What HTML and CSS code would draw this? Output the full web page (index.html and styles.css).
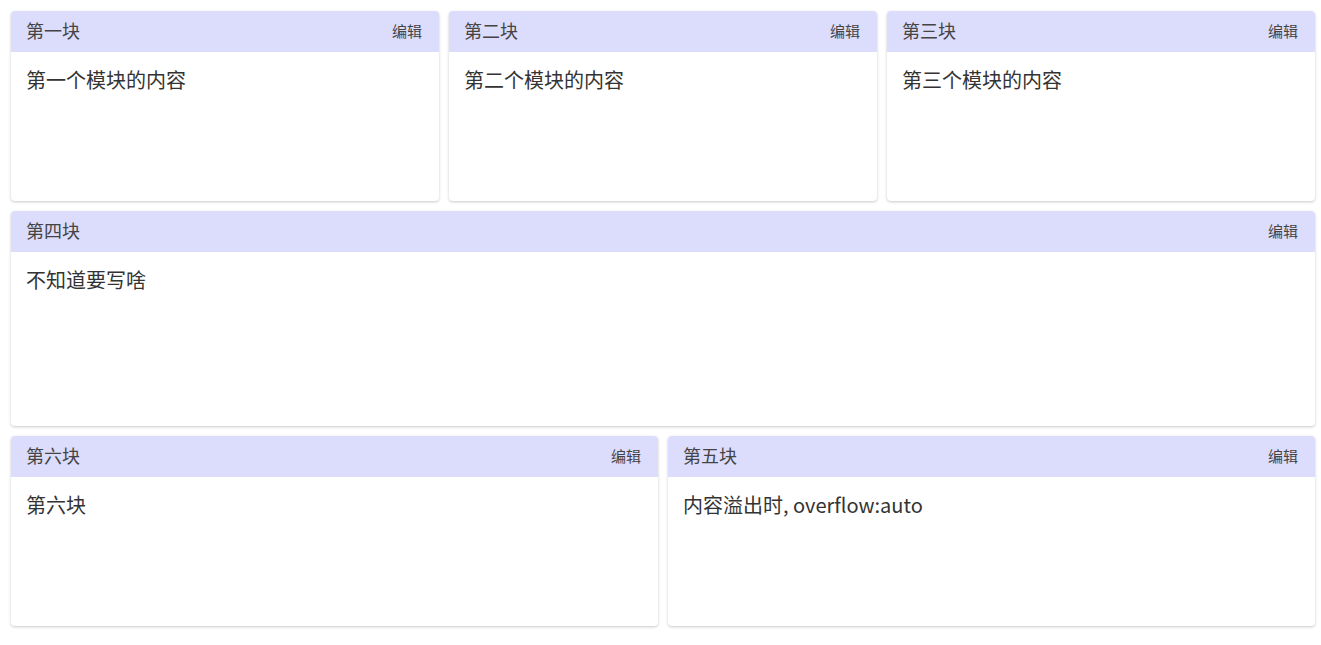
FILE: index.html
```html
<!DOCTYPE html>
<html lang="zh-CN">
<head>
    <meta charset="UTF-8">
    <meta name="viewport" content="width=device-width, initial-scale=1.0">
    <title>模块布局</title>
    <link rel="stylesheet" href="styles.css">
</head>
<body>
    <div class="layout">
        <div class="row">
            <div class="block">
                <div class="block-head"><span class="block-title">第一块</span><a class="edit">编辑</a></div>
                <div class="block-body">第一个模块的内容</div>
            </div>
            <div class="block">
                <div class="block-head"><span class="block-title">第二块</span><a class="edit">编辑</a></div>
                <div class="block-body">第二个模块的内容</div>
            </div>
            <div class="block">
                <div class="block-head"><span class="block-title">第三块</span><a class="edit">编辑</a></div>
                <div class="block-body">第三个模块的内容</div>
            </div>
        </div>
        <div class="row tall">
            <div class="block">
                <div class="block-head"><span class="block-title">第四块</span><a class="edit">编辑</a></div>
                <div class="block-body">不知道要写啥</div>
            </div>
        </div>
        <div class="row">
            <div class="block">
                <div class="block-head"><span class="block-title">第六块</span><a class="edit">编辑</a></div>
                <div class="block-body">第六块</div>
            </div>
            <div class="block">
                <div class="block-head"><span class="block-title">第五块</span><a class="edit">编辑</a></div>
                <div class="block-body scroll">内容溢出时, overflow:auto</div>
            </div>
        </div>
    </div>
</body>
</html>
```

FILE: styles.css
```css
body {
    margin: 0;
    background: #fff;
    font-family: "Noto Sans CJK SC", "Noto Sans", sans-serif;
    color: #333;
}

.layout {
    display: flex;
    flex-direction: column;
    gap: 10px;
    padding: 11px 6px 19px 11px;
}

.row {
    display: flex;
    gap: 10px;
    height: 190px;
}

.row.tall {
    height: 215px;
}

.block {
    flex: 1;
    display: flex;
    flex-direction: column;
    background: #fff;
    border-radius: 4px;
    overflow: hidden;
    box-shadow: 0 1px 3px rgba(0, 0, 0, 0.22);
}

.block-head {
    display: flex;
    align-items: center;
    justify-content: space-between;
    height: 41px;
    box-sizing: border-box;
    padding: 0 17px 3px 15px;
    background: #dcdcfd;
    flex-shrink: 0;
}

.block-title {
    font-size: 18px;
    color: #444;
}

.edit {
    font-size: 15px;
    color: #444;
    cursor: pointer;
}

.block-body {
    flex: 1;
    padding: 13px 15px 15px;
    font-size: 20px;
    line-height: 30px;
    color: #333;
}

.scroll {
    overflow: auto;
}
```
